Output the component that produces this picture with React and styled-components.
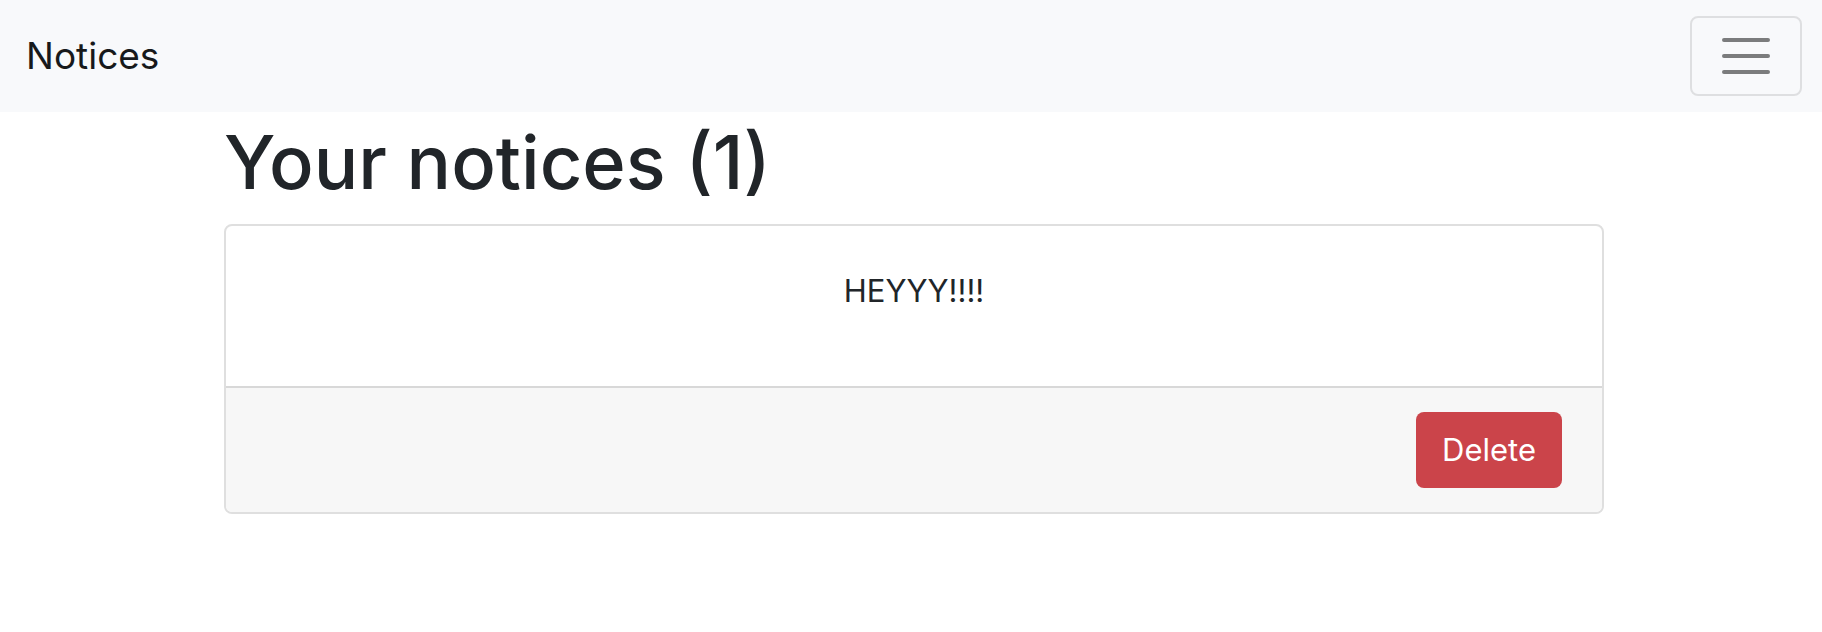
import React from "react";
import styled, { createGlobalStyle } from "styled-components";

const GlobalStyle = createGlobalStyle`
  *, *::before, *::after { box-sizing: border-box; }
  body {
    margin: 0;
    background: #fff;
    color: #212529;
    font-family: Inter, "Liberation Sans", sans-serif;
    font-size: 31px;
    line-height: 48px;
  }
`;

const Navbar = styled.nav`
  display: flex;
  align-items: center;
  justify-content: space-between;
  padding: 16px 20px 16px 26px;
  background: #f8f9fb;
`;

const Brand = styled.a`
  color: #17191b;
  font-size: 37px;
  line-height: 60px;
  text-decoration: none;
`;

const Toggler = styled.button`
  display: flex;
  align-items: center;
  justify-content: center;
  width: 112px;
  height: 80px;
  padding: 0;
  border: 2px solid #dedfe1;
  border-radius: 8px;
  background: transparent;
`;

const Page = styled.main`
  padding: 8px 0 0 6px;
`;

const Container = styled.div`
  width: 76%;
  max-width: 1380px;
  margin: 0 auto;
`;

const Title = styled.h1`
  margin: 0 0 20px;
  font-size: 74px;
  font-weight: 500;
  line-height: 84px;
`;

const Card = styled.article`
  border: 2px solid #dfdfdf;
  border-radius: 8px;
  overflow: hidden;
`;

const CardBody = styled.div`
  padding: 41px 32px 71px;
  text-align: center;
`;

const Message = styled.p`
  margin: 0;
`;

const CardFooter = styled.footer`
  display: flex;
  justify-content: flex-end;
  padding: 24px 40px;
  border-top: 2px solid #d8d8d8;
  background: #f7f7f7;
`;

const DeleteButton = styled.button`
  padding: 14px 26px;
  border: 0;
  border-radius: 8px;
  background: #cb444a;
  color: #fff;
  font: inherit;
`;

export default function App() {
  return (
    <>
      <GlobalStyle />
      <Navbar>
        <Brand href="#">Notices</Brand>
        <Toggler type="button" aria-label="Toggle navigation">
          <svg width="60" height="60" viewBox="0 0 30 30" aria-hidden="true">
            <path stroke="#7b7c7d" strokeLinecap="round" strokeWidth="2" d="M4 7h22M4 15h22M4 23h22" />
          </svg>
        </Toggler>
      </Navbar>
      <Page>
        <Container>
          <Title>Your notices (1)</Title>
          <Card>
            <CardBody>
              <Message>HEYYY!!!!</Message>
            </CardBody>
            <CardFooter>
              <DeleteButton type="button">Delete</DeleteButton>
            </CardFooter>
          </Card>
        </Container>
      </Page>
    </>
  );
}
